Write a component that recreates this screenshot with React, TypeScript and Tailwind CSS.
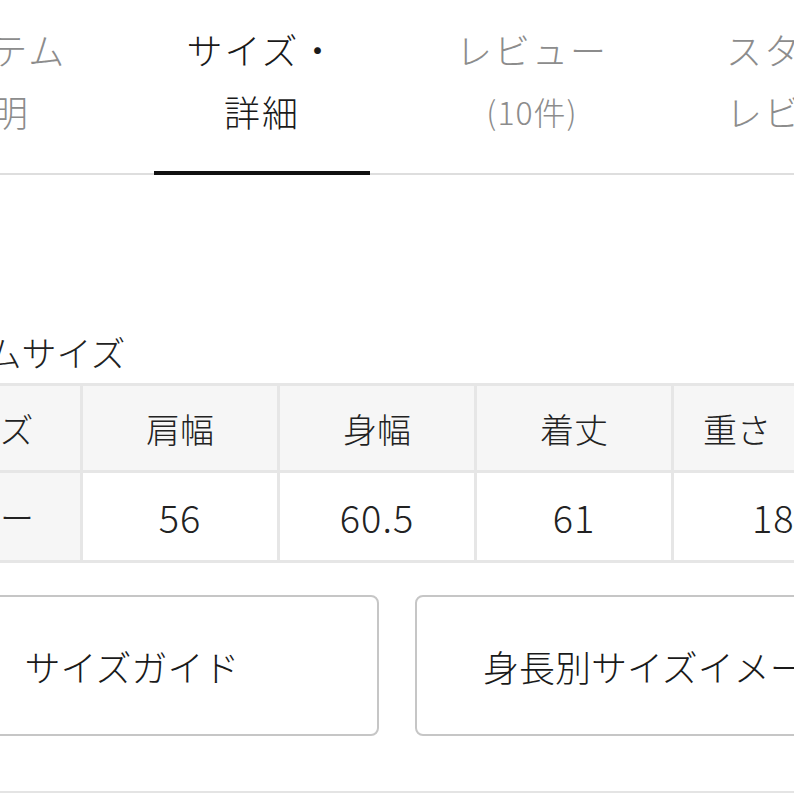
const jp = { fontFamily: '"Noto Sans CJK JP", "Noto Sans", sans-serif' };

const tabs = [
  { top: 'アイテム', bottom: '説明', active: false },
  { top: 'サイズ・', bottom: '詳細', active: true },
  { top: 'レビュー', bottom: '(10件)', active: false, small: true },
  { top: 'スタッフ', bottom: 'レビュー', active: false },
];

const header = ['サイズ', '肩幅', '身幅', '着丈', '重さ （g）'];
const values = ['フリー', '56', '60.5', '61', '180'];

export default function App() {
  return (
    <div className="w-[794px] h-[794px] overflow-hidden bg-white text-[#222] font-light" style={jp}>
      {/* Tabs */}
      <div className="flex w-[1080px] -ml-[143px] border-b-2 border-[#dedede]">
        {tabs.map((t) => (
          <div key={t.top} className="w-[270px] h-[173px] shrink-0 flex flex-col">
            <div
              className={`flex-1 flex flex-col items-center pt-[18px] text-[36px] leading-[62px] tracking-[2px] ${
                t.active ? 'text-[#1a1a1a]' : 'text-[#8c8c8c]'
              }`}
            >
              <span>{t.top}</span>
              <span className={t.small ? 'text-[32px] tracking-[1px]' : ''}>{t.bottom}</span>
            </div>
            {t.active && <div className="h-[4px] mx-[27px] bg-[#111] -mb-[2px] relative" />}
          </div>
        ))}
      </div>

      {/* Content */}
      <div className="w-[1024px] -ml-[115px]">
        <h3 className="mt-[157px] text-[35px] leading-[40px] font-light">アイテムサイズ</h3>

        <div className="mt-[11px] grid grid-cols-[194px_194px_194px_194px_220px] gap-[3px] p-[3px] bg-[#e6e6e6] w-fit -ml-[2px]">
          {header.map((h) => (
            <div key={h} className="h-[84px] bg-[#f6f6f6] flex items-center justify-center text-[34px] whitespace-nowrap">
              {h}
            </div>
          ))}
          {values.map((v, i) => (
            <div
              key={v}
              className={`h-[87px] flex items-center justify-center whitespace-nowrap ${
                i === 0 ? 'bg-[#f6f6f6] text-[34px]' : 'bg-white text-[38px] tracking-[1px]'
              }`}
            >
              {v}
            </div>
          ))}
        </div>

        <div className="mt-[32px] flex gap-[36px]">
          <button className="w-[494px] h-[141px] border-2 border-[#c6c6c6] rounded-[8px] bg-white text-[36px] text-[#1a1a1a]">
            サイズガイド
          </button>
          <button className="w-[494px] h-[141px] border-2 border-[#c6c6c6] rounded-[8px] bg-white text-[36px] text-[#1a1a1a] whitespace-nowrap">
            身長別サイズイメージ
          </button>
        </div>
      </div>

      <div className="mt-[55px] w-full border-t-2 border-[#e4e4e4]" />
    </div>
  );
}
